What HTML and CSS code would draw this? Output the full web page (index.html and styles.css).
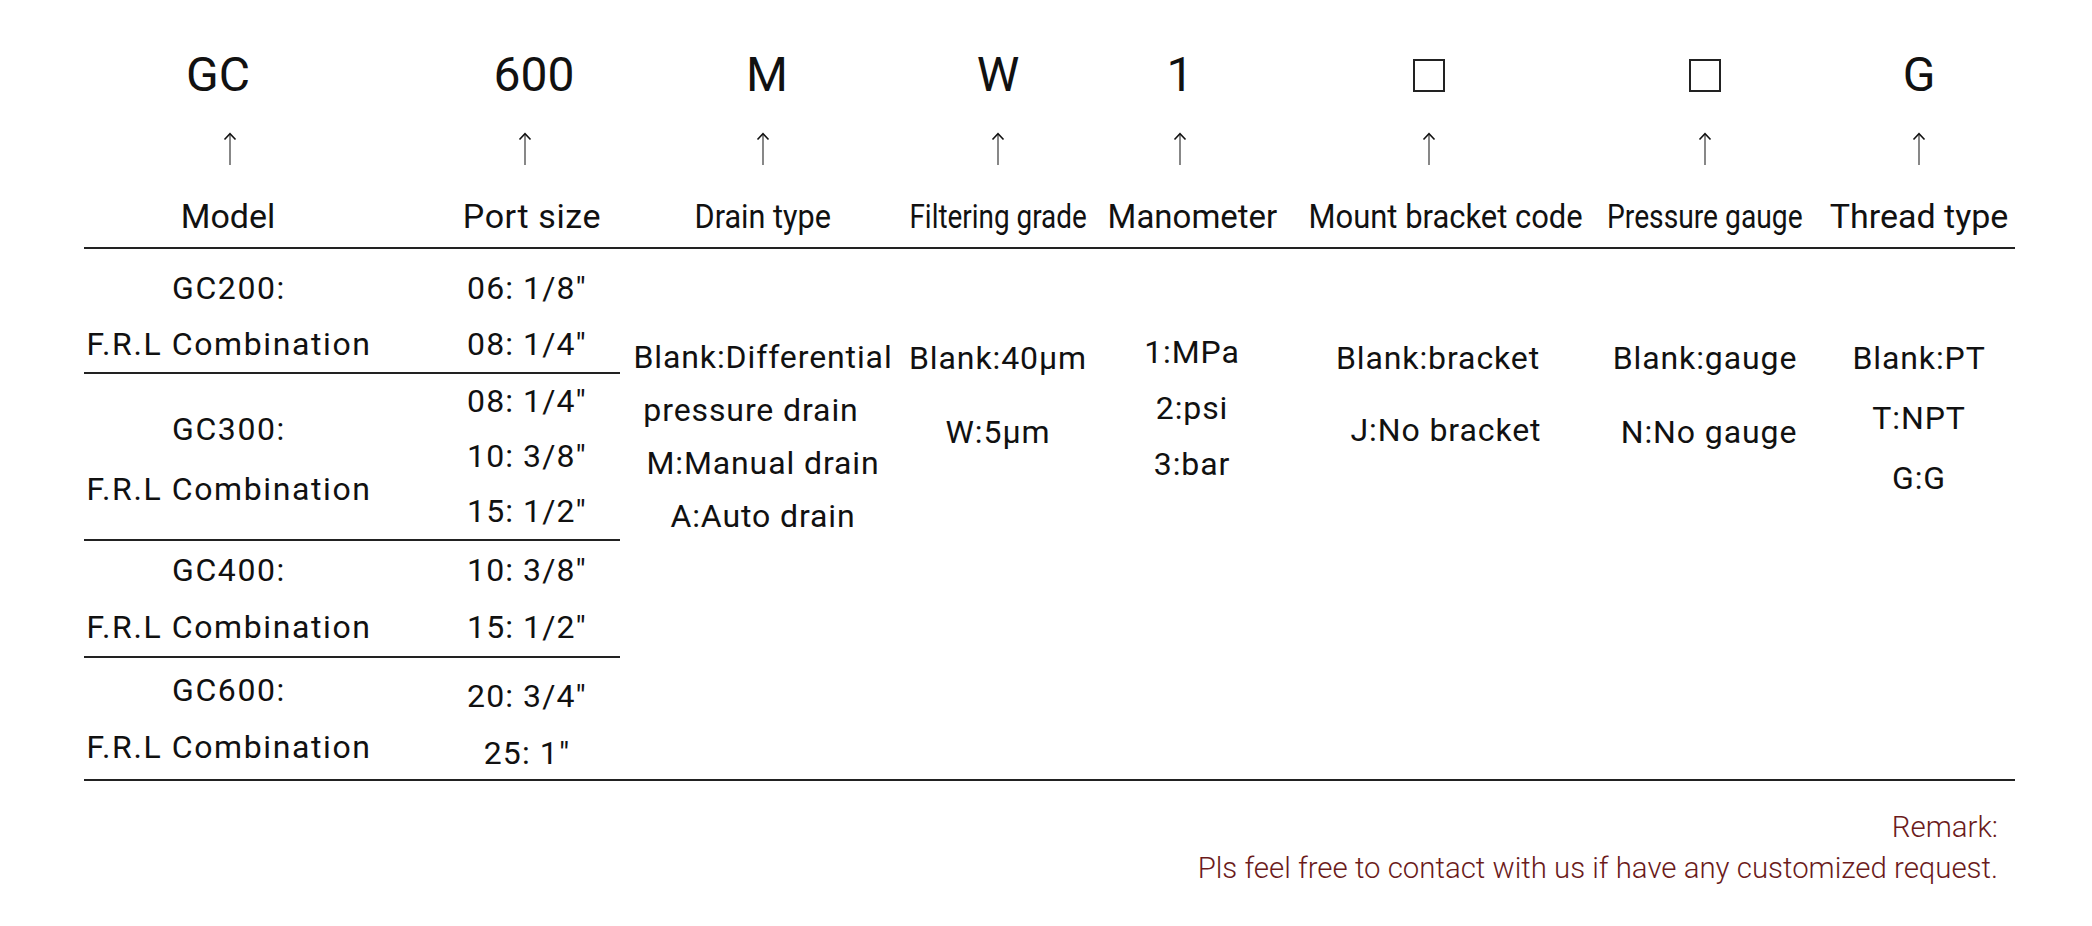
FILE: index.html
```html
<!DOCTYPE html>
<html lang="en">
<head>
<meta charset="utf-8">
<title>GC series F.R.L combination – ordering code</title>
<link rel="stylesheet" href="styles.css">
</head>
<body>
<main class="sheet">
  <section class="table">
    <div class="hcell">
      <div class="code nudge-10">GC</div>
      <svg class="arrow nudge-r2" viewBox="0 0 14 34"><line x1="7" y1="2" x2="7" y2="33"/><polyline points="1.5,7.5 7,1.6 12.5,7.5"/></svg>
      <div class="label">Model</div>
    </div>
    <div class="hcell">
      <div class="code nudge-r2">600</div>
      <svg class="arrow nudge-7" viewBox="0 0 14 34"><line x1="7" y1="2" x2="7" y2="33"/><polyline points="1.5,7.5 7,1.6 12.5,7.5"/></svg>
      <div class="label spaced">Port size</div>
    </div>
    <div class="hcell">
      <div class="code nudge-r4">M</div>
      <svg class="arrow" viewBox="0 0 14 34"><line x1="7" y1="2" x2="7" y2="33"/><polyline points="1.5,7.5 7,1.6 12.5,7.5"/></svg>
      <div class="label sq-90">Drain type</div>
    </div>
    <div class="hcell">
      <div class="code">W</div>
      <svg class="arrow" viewBox="0 0 14 34"><line x1="7" y1="2" x2="7" y2="33"/><polyline points="1.5,7.5 7,1.6 12.5,7.5"/></svg>
      <div class="label sq-82">Filtering grade</div>
    </div>
    <div class="hcell">
      <div class="code nudge-12">1</div>
      <svg class="arrow nudge-12" viewBox="0 0 14 34"><line x1="7" y1="2" x2="7" y2="33"/><polyline points="1.5,7.5 7,1.6 12.5,7.5"/></svg>
      <div class="label sq-97">Manometer</div>
    </div>
    <div class="hcell">
      <div class="code nudge-17"><span class="blank"></span></div>
      <svg class="arrow nudge-17" viewBox="0 0 14 34"><line x1="7" y1="2" x2="7" y2="33"/><polyline points="1.5,7.5 7,1.6 12.5,7.5"/></svg>
      <div class="label sq-91">Mount bracket code</div>
    </div>
    <div class="hcell">
      <div class="code"><span class="blank"></span></div>
      <svg class="arrow" viewBox="0 0 14 34"><line x1="7" y1="2" x2="7" y2="33"/><polyline points="1.5,7.5 7,1.6 12.5,7.5"/></svg>
      <div class="label sq-83">Pressure gauge</div>
    </div>
    <div class="hcell">
      <div class="code">G</div>
      <svg class="arrow" viewBox="0 0 14 34"><line x1="7" y1="2" x2="7" y2="33"/><polyline points="1.5,7.5 7,1.6 12.5,7.5"/></svg>
      <div class="label">Thread type</div>
    </div>

    <div class="rule"></div>

    <div class="models">
      <div class="group g1">
        <div class="mcell"><span>GC200:</span><span>F.R.L Combination</span></div>
        <div class="pcell"><span>06: 1/8″</span><span>08: 1/4″</span></div>
      </div>
      <div class="group g2">
        <div class="mcell"><span>GC300:</span><span>F.R.L Combination</span></div>
        <div class="pcell"><span>08: 1/4″</span><span>10: 3/8″</span><span>15: 1/2″</span></div>
      </div>
      <div class="group g3">
        <div class="mcell"><span>GC400:</span><span>F.R.L Combination</span></div>
        <div class="pcell"><span>10: 3/8″</span><span>15: 1/2″</span></div>
      </div>
      <div class="group g4">
        <div class="mcell"><span>GC600:</span><span>F.R.L Combination</span></div>
        <div class="pcell"><span>20: 3/4″</span><span>25: 1″</span></div>
      </div>
    </div>

    <div class="opt o-drain">
      <span>Blank:Differential</span>
      <span class="nudge-12">pressure drain</span>
      <span>M:Manual drain</span>
      <span>A:Auto drain</span>
    </div>
    <div class="opt o-filter">
      <span>Blank:40μm</span>
      <span>W:5μm</span>
    </div>
    <div class="opt o-mano">
      <span>1:MPa</span>
      <span>2:psi</span>
      <span>3:bar</span>
    </div>
    <div class="opt o-mount">
      <span class="nudge-8">Blank:bracket</span>
      <span>J:No bracket</span>
    </div>
    <div class="opt o-gauge">
      <span>Blank:gauge</span>
      <span class="nudge-r4">N:No gauge</span>
    </div>
    <div class="opt o-thread">
      <span>Blank:PT</span>
      <span>T:NPT</span>
      <span>G:G</span>
    </div>

    <div class="rule"></div>
  </section>

  <footer class="remark">
    <p>Remark:</p>
    <p>Pls feel free to contact with us if have any customized request.</p>
  </footer>
</main>
</body>
</html>
```

FILE: styles.css
```css
* {
  box-sizing: border-box;
  margin: 0;
  padding: 0;
}

html,
body {
  background: #ffffff;
}

body {
  width: 2092px;
  height: 926px;
  overflow: hidden;
  font-family: Roboto, "Noto Sans", "Liberation Sans", sans-serif;
  color: #111111;
}

/* ---------- table grid ---------- */
.table {
  display: grid;
  grid-template-columns: 456px 152px 310px 160px 228px 280px 238px 190px;
}

.hcell {
  display: flex;
  flex-direction: column;
  align-items: center;
  padding: 51px 0 11px;
}

.code {
  height: 48px;
  display: flex;
  align-items: center;
  justify-content: center;
  font-size: 48px;
  line-height: 48px;
  white-space: nowrap;
}

.blank {
  display: block;
  width: 32px;
  height: 33px;
  border: 2px solid #222222;
}

.arrow {
  display: block;
  width: 14px;
  height: 34px;
  margin-top: 33px;
  overflow: visible;
}

.arrow line {
  stroke: #555555;
  stroke-width: 1.4;
}

.arrow polyline {
  fill: none;
  stroke: #111111;
  stroke-width: 1.6;
}

.label {
  margin-top: 30px;
  font-size: 34px;
  line-height: 40px;
  white-space: nowrap;
}

.spaced { letter-spacing: 0.6px; }
.sq-90 { transform: scaleX(0.9); }
.sq-82 { transform: scaleX(0.82); }
.sq-83 { transform: scaleX(0.83); }
.sq-91 { transform: scaleX(0.91); }
.sq-97 { transform: scaleX(0.97); }

/* small optical shifts of centred items */
.nudge-7 { margin-right: 14px; }
.nudge-8 { margin-right: 16px; }
.nudge-10 { margin-right: 20px; }
.nudge-12 { margin-right: 24px; }
.nudge-17 { margin-right: 34px; }
.nudge-r2 { margin-left: 4px; }
.nudge-r4 { margin-left: 8px; }

.rule {
  grid-column: 1 / -1;
  margin-left: 84px;
  width: 1931px;
  height: 2px;
  background: #222222;
}

/* ---------- model / port block ---------- */
.models {
  grid-column: 1 / 3;
  justify-self: start;
  margin-left: 84px;
  width: 536px;
  font-size: 32px;
  line-height: 57px;
}

.group {
  display: flex;
  border-bottom: 2px solid #222222;
}

.group:last-child {
  border-bottom: 0;
}

.g1 {
  padding-top: 11px;
  line-height: 56px;
}

.g3 { padding-top: 1px; }
.g4 { padding: 4px 0 3px; }

.mcell {
  width: 290px;
  display: flex;
  flex-direction: column;
  align-items: center;
  justify-content: center;
  letter-spacing: 1.6px;
  white-space: nowrap;
}

.pcell {
  flex: 1;
  padding-left: 60px;
  display: flex;
  flex-direction: column;
  align-items: center;
  justify-content: center;
  letter-spacing: 1.1px;
  white-space: nowrap;
}

.g2 .mcell {
  padding-top: 4px;
  line-height: 60px;
}

.g2 .pcell {
  line-height: 55px;
}

.g4 .pcell {
  padding-top: 6px;
  margin-bottom: -6px;
}

/* ---------- option columns ---------- */
.opt {
  display: flex;
  flex-direction: column;
  align-items: center;
  font-size: 32px;
  letter-spacing: 0.9px;
  white-space: nowrap;
}

.o-drain { padding-top: 82px; line-height: 53px; }
.o-filter { padding-top: 72px; line-height: 74px; }
.o-mano { padding-top: 75px; line-height: 56px; }
.o-mount { padding-top: 73px; line-height: 72px; }
.o-gauge { padding-top: 72px; line-height: 74px; }
.o-thread { padding-top: 79px; line-height: 60px; }

/* ---------- remark ---------- */
.remark {
  margin-top: 26px;
  padding-right: 94px;
  text-align: right;
  color: #6b1b1b;
  font-size: 29.4px;
  font-weight: 300;
  line-height: 41px;
}
```
